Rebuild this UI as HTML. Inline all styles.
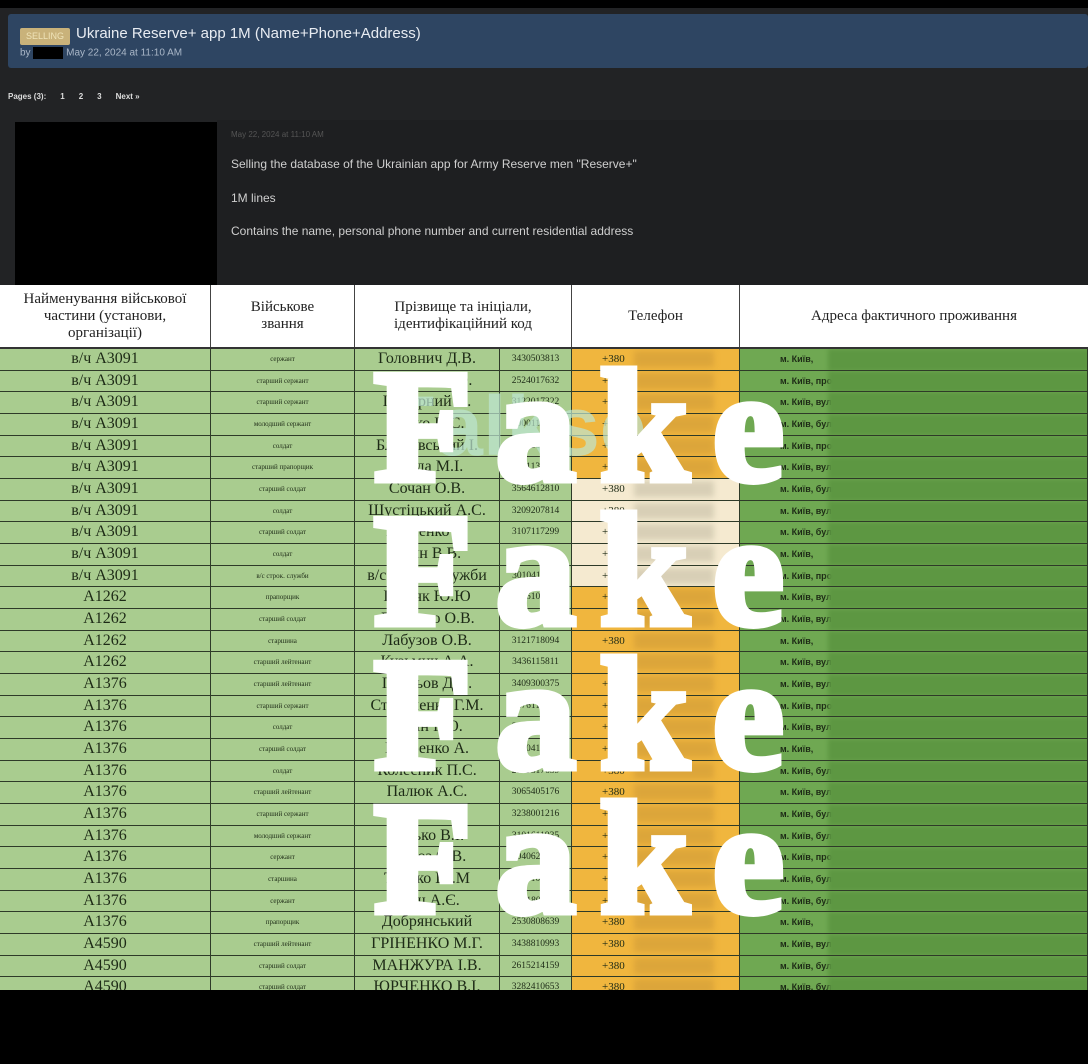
<!DOCTYPE html>
<html><head><meta charset="utf-8"><style>
*{margin:0;padding:0;box-sizing:border-box}
body{width:1088px;height:1064px;background:#000;position:relative;overflow:hidden;font-family:"Liberation Sans",sans-serif}
.top{position:absolute;left:0;top:8px;width:1088px;height:277px;background:#222325}
.bar{position:absolute;left:8px;top:14px;width:1080px;height:54px;background:#2e4562;border-radius:3px}
.tag{position:absolute;left:12px;top:14px;width:50px;height:17px;background:#c9b27a;color:#efe3b8;font-size:9px;line-height:17px;text-align:center;border-radius:2px}
.title{position:absolute;left:68px;top:11px;color:#e8ecf2;font-size:15px}
.by{position:absolute;left:12px;top:33px;color:#aab7c8;font-size:10px}
.blk{display:inline-block;width:30px;height:12px;background:#000;vertical-align:middle}
.pages{position:absolute;left:8px;top:92px;color:#ddd;font-size:8px;font-weight:bold}
.pages span{display:inline-block;margin-left:14px}
.avatar{position:absolute;left:15px;top:122px;width:202px;height:163px;background:#000}
.post{position:absolute;left:217px;top:120px;width:871px;height:165px;background:#1e1f21;color:#cfcfcf;font-size:12px}
.post p{position:absolute;left:14px}
.tbl{position:absolute;left:0;top:285px;width:1088px;height:705px;background:#a9cc8f;overflow:hidden}
.hd{display:flex;height:64px;background:#fff;border-bottom:2px solid #333;font-family:"Liberation Serif",serif;color:#222;font-size:15px;text-align:center}
.hd div{display:flex;align-items:center;justify-content:center;border-right:1.5px solid #444;line-height:17px}
.r{display:flex;height:21.68px;border-bottom:1.5px solid #2e3a28;font-family:"Liberation Serif",serif;color:#1d2a16}
.r div{border-right:1.5px solid #2e3a28;overflow:hidden;white-space:nowrap;line-height:20px}
.c1{width:211px;text-align:center;font-size:16px}
.c2{width:144px;text-align:center;font-size:7px}
.c3{width:145px;text-align:center;font-size:16px}
.c4{width:72px;text-align:center;font-size:9.5px}
.c5{width:168px;background:#f0b63e;font-size:11px;position:relative;padding-left:30px}
.c5:after{content:"";position:absolute;left:62px;top:2px;width:80px;height:16px;background:#dca53a;filter:blur(3px)}
.cr .c5{background:#f5ead0}.cr .c5:after{background:#d8cfb6}
.c6{width:348px;background:#6fa852;font-size:9px;font-family:"Liberation Sans",sans-serif;font-weight:bold;position:relative;padding-left:40px}
.c6:after{content:"";position:absolute;left:88px;top:0;width:270px;height:22px;background:#5d9742;filter:blur(2px)}
.fake{position:absolute;left:374px;font-family:"Liberation Serif",serif;font-weight:bold;font-size:160px;line-height:160px;color:#fff;-webkit-text-stroke:7px #fff;letter-spacing:24px}
.ghost{position:absolute;left:385px;top:378px;font-family:"Liberation Sans",sans-serif;font-weight:bold;font-size:84px;color:rgba(190,230,210,.7)}
</style></head><body>
<div class="top"></div>
<div class="bar"><div class="tag">SELLING</div><div class="title">Ukraine Reserve+ app 1M (Name+Phone+Address)</div><div class="by">by <span class="blk"></span> May 22, 2024 at 11:10 AM</div></div>
<div class="pages">Pages (3):<span>1</span><span>2</span><span>3</span><span>Next »</span></div>
<div class="avatar"></div>
<div class="post"><p style="top:10px;font-size:8px;color:#555">May 22, 2024 at 11:10 AM</p><p style="top:37px">Selling the database of the Ukrainian app for Army Reserve men "Reserve+"</p><p style="top:71px">1M lines</p><p style="top:104px">Contains the name, personal phone number and current residential address</p></div>
<div class="tbl">
<div class="hd"><div style="width:211px">Найменування військової<br>частини (установи,<br>організації)</div><div style="width:144px">Військове<br>звання</div><div style="width:217px">Прізвище та ініціали,<br>ідентифікаційний код</div><div style="width:168px">Телефон</div><div style="width:348px;border:0">Адреса фактичного проживання</div></div>
<div class="r"><div class="c1">в/ч А3091</div><div class="c2">сержант</div><div class="c3">Головнич Д.В.</div><div class="c4">3430503813</div><div class="c5">+380</div><div class="c6">м. Київ,</div></div>
<div class="r"><div class="c1">в/ч А3091</div><div class="c2">старший сержант</div><div class="c3">Андрієнко О.</div><div class="c4">2524017632</div><div class="c5">+380</div><div class="c6">м. Київ, просп</div></div>
<div class="r"><div class="c1">в/ч А3091</div><div class="c2">старший сержант</div><div class="c3">Підгірний А.</div><div class="c4">3122017322</div><div class="c5">+380</div><div class="c6">м. Київ, вул</div></div>
<div class="r"><div class="c1">в/ч А3091</div><div class="c2">молодший сержант</div><div class="c3">Бойко Н.С.</div><div class="c4">3000114727</div><div class="c5">+380</div><div class="c6">м. Київ, бульв</div></div>
<div class="r"><div class="c1">в/ч А3091</div><div class="c2">солдат</div><div class="c3">Блажевський І.</div><div class="c4">2921504816</div><div class="c5">+380</div><div class="c6">м. Київ, просп</div></div>
<div class="r"><div class="c1">в/ч А3091</div><div class="c2">старший прапорщик</div><div class="c3">Гнида М.І.</div><div class="c4">2801137920</div><div class="c5">+380</div><div class="c6">м. Київ, вул</div></div>
<div class="r cr"><div class="c1">в/ч А3091</div><div class="c2">старший солдат</div><div class="c3">Сочан О.В.</div><div class="c4">3564612810</div><div class="c5">+380</div><div class="c6">м. Київ, бульв</div></div>
<div class="r cr"><div class="c1">в/ч А3091</div><div class="c2">солдат</div><div class="c3">Шустіцький А.С.</div><div class="c4">3209207814</div><div class="c5">+380</div><div class="c6">м. Київ, вул</div></div>
<div class="r cr"><div class="c1">в/ч А3091</div><div class="c2">старший солдат</div><div class="c3">Власенко В.</div><div class="c4">3107117299</div><div class="c5">+380</div><div class="c6">м. Київ, бульв</div></div>
<div class="r cr"><div class="c1">в/ч А3091</div><div class="c2">солдат</div><div class="c3">Лейн В.В.</div><div class="c4">3412817795</div><div class="c5">+380</div><div class="c6">м. Київ,</div></div>
<div class="r cr"><div class="c1">в/ч А3091</div><div class="c2">в/с строк. служби</div><div class="c3">в/с строк. служби</div><div class="c4">3010416111</div><div class="c5">+380</div><div class="c6">м. Київ, просп</div></div>
<div class="r"><div class="c1">А1262</div><div class="c2">прапорщик</div><div class="c3">Гредяк Ю.Ю</div><div class="c4">2746100092</div><div class="c5">+380</div><div class="c6">м. Київ, вул</div></div>
<div class="r"><div class="c1">А1262</div><div class="c2">старший солдат</div><div class="c3">Ляшенко О.В.</div><div class="c4">3010524417</div><div class="c5">+380</div><div class="c6">м. Київ, вул</div></div>
<div class="r"><div class="c1">А1262</div><div class="c2">старшина</div><div class="c3">Лабузов О.В.</div><div class="c4">3121718094</div><div class="c5">+380</div><div class="c6">м. Київ,</div></div>
<div class="r"><div class="c1">А1262</div><div class="c2">старший лейтенант</div><div class="c3">Кузьмич А.А.</div><div class="c4">3436115811</div><div class="c5">+380</div><div class="c6">м. Київ, вул</div></div>
<div class="r"><div class="c1">А1376</div><div class="c2">старший лейтенант</div><div class="c3">Петрьов Д.В.</div><div class="c4">3409300375</div><div class="c5">+380</div><div class="c6">м. Київ, вул</div></div>
<div class="r"><div class="c1">А1376</div><div class="c2">старший сержант</div><div class="c3">Степаненко Г.М.</div><div class="c4">2276110957</div><div class="c5">+380</div><div class="c6">м. Київ, просп</div></div>
<div class="r"><div class="c1">А1376</div><div class="c2">солдат</div><div class="c3">Кулін І.Ю.</div><div class="c4">3011219952</div><div class="c5">+380</div><div class="c6">м. Київ, вул</div></div>
<div class="r"><div class="c1">А1376</div><div class="c2">старший солдат</div><div class="c3">Петренко А.</div><div class="c4">3120418124</div><div class="c5">+380</div><div class="c6">м. Київ,</div></div>
<div class="r"><div class="c1">А1376</div><div class="c2">солдат</div><div class="c3">Колесник П.С.</div><div class="c4">2709817639</div><div class="c5">+380</div><div class="c6">м. Київ, бульв</div></div>
<div class="r"><div class="c1">А1376</div><div class="c2">старший лейтенант</div><div class="c3">Палюк А.С.</div><div class="c4">3065405176</div><div class="c5">+380</div><div class="c6">м. Київ, вул</div></div>
<div class="r"><div class="c1">А1376</div><div class="c2">старший сержант</div><div class="c3">Шевченко</div><div class="c4">3238001216</div><div class="c5">+380</div><div class="c6">м. Київ, бульв</div></div>
<div class="r"><div class="c1">А1376</div><div class="c2">молодший сержант</div><div class="c3">Гулько В.І.</div><div class="c4">3101611935</div><div class="c5">+380</div><div class="c6">м. Київ, бульв</div></div>
<div class="r"><div class="c1">А1376</div><div class="c2">сержант</div><div class="c3">Мороз О.В.</div><div class="c4">3040621135</div><div class="c5">+380</div><div class="c6">м. Київ, просп</div></div>
<div class="r"><div class="c1">А1376</div><div class="c2">старшина</div><div class="c3">Тодчко Ю.М</div><div class="c4">3397101014</div><div class="c5">+380</div><div class="c6">м. Київ, бульв</div></div>
<div class="r"><div class="c1">А1376</div><div class="c2">сержант</div><div class="c3">Ткач А.Є.</div><div class="c4">3101807111</div><div class="c5">+380</div><div class="c6">м. Київ, бульв</div></div>
<div class="r"><div class="c1">А1376</div><div class="c2">прапорщик</div><div class="c3">Добрянський</div><div class="c4">2530808639</div><div class="c5">+380</div><div class="c6">м. Київ,</div></div>
<div class="r"><div class="c1">А4590</div><div class="c2">старший лейтенант</div><div class="c3">ГРІНЕНКО М.Г.</div><div class="c4">3438810993</div><div class="c5">+380</div><div class="c6">м. Київ, вул</div></div>
<div class="r"><div class="c1">А4590</div><div class="c2">старший солдат</div><div class="c3">МАНЖУРА І.В.</div><div class="c4">2615214159</div><div class="c5">+380</div><div class="c6">м. Київ, бульв</div></div>
<div class="r"><div class="c1">А4590</div><div class="c2">старший солдат</div><div class="c3">ЮРЧЕНКО В.І.</div><div class="c4">3282410653</div><div class="c5">+380</div><div class="c6">м. Київ, бульв</div></div>
</div>
<div class="ghost">Falkse</div>
<div class="fake" style="top:346px">Fake</div>
<div class="fake" style="top:490px">Fake</div>
<div class="fake" style="top:634px">Fake</div>
<div class="fake" style="top:778px">Fake</div>
</body></html>
